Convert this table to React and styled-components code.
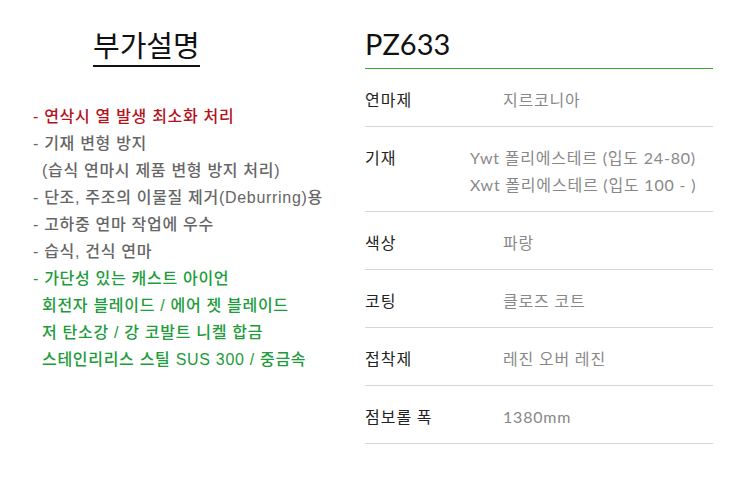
import React from 'react';
import styled, { createGlobalStyle } from 'styled-components';

const GlobalStyle = createGlobalStyle`
  body {
    margin: 0;
    background: #fff;
    font-family: "Liberation Sans", "Noto Sans CJK KR", sans-serif;
  }
`;

const Page = styled.div`
  display: flex;
  width: 730px;
  height: 478px;
  padding-top: 25px;
  box-sizing: border-box;
`;

const LeftCol = styled.div`
  width: 332px;
  padding-left: 33px;
`;

const Title = styled.h2`
  display: inline-block;
  margin: 0 0 0 60px;
  padding-bottom: 2px;
  font-size: 29px;
  font-weight: 400;
  line-height: 38px;
  color: #111;
  border-bottom: 2px solid #111;
  font-family: "Noto Sans CJK KR", sans-serif;
`;

const List = styled.ul`
  list-style: none;
  margin: 36px 0 0;
  padding: 0;
`;

const Item = styled.li`
  font-size: 16px;
  line-height: 27px;
  font-weight: 500;
  letter-spacing: 0.7px;
  white-space: nowrap;
  color: ${(p) => (p.tone === 'red' ? '#b3121d' : p.tone === 'green' ? '#1c9c3a' : '#666')};
  padding-left: ${(p) => (p.indent ? '9px' : '0')};
`;

const RightCol = styled.div`
  width: 348px;
`;

const Model = styled.div`
  font-family: "Lato", "Noto Sans CJK KR", sans-serif;
  font-size: 29px;
  line-height: 38px;
  color: #111;
  padding-bottom: 5px;
  border-bottom: 1.5px solid #3aaa35;
`;

const Row = styled.div`
  display: flex;
  align-items: flex-start;
  border-bottom: 1px solid #d6d6d6;
  padding: 17px 0 13px;
`;

const Label = styled.div`
  width: ${(p) => (p.narrow ? '105px' : '138px')};
  font-family: "Noto Sans CJK KR", sans-serif;
  font-size: 16px;
  line-height: 27px;
  letter-spacing: 1px;
  color: #222;
`;

const Value = styled.div`
  font-family: "Lato", "Noto Sans CJK KR", sans-serif;
  font-size: 16px;
  line-height: 27px;
  letter-spacing: 0.8px;
  color: #888;
`;

const left = [
  { t: '- 연삭시 열 발생 최소화 처리', tone: 'red' },
  { t: '- 기재 변형 방지' },
  { t: '(습식 연마시 제품 변형 방지 처리)', indent: true },
  { t: '- 단조, 주조의 이물질 제거(Deburring)용' },
  { t: '- 고하중 연마 작업에 우수' },
  { t: '- 습식, 건식 연마' },
  { t: '- 가단성 있는 캐스트 아이언', tone: 'green' },
  { t: '회전자 블레이드 / 에어 젯 블레이드', tone: 'green', indent: true },
  { t: '저 탄소강 / 강 코발트 니켈 합금', tone: 'green', indent: true },
  { t: '스테인리리스 스틸 SUS 300 / 중금속', tone: 'green', indent: true },
];

const specs = [
  { label: '연마제', value: ['지르코니아'] },
  { label: '기재', value: ['Ywt 폴리에스테르 (입도 24-80)', 'Xwt 폴리에스테르 (입도 100 - )'], narrow: true },
  { label: '색상', value: ['파랑'] },
  { label: '코팅', value: ['클로즈 코트'] },
  { label: '접착제', value: ['레진 오버 레진'] },
  { label: '점보롤 폭', value: ['1380mm'] },
];

export default function App() {
  return (
    <>
      <GlobalStyle />
      <Page>
        <LeftCol>
          <Title>부가설명</Title>
          <List>
            {left.map((l, i) => (
              <Item key={i} tone={l.tone} indent={l.indent}>{l.t}</Item>
            ))}
          </List>
        </LeftCol>
        <RightCol>
          <Model>PZ633</Model>
          {specs.map((s) => (
            <Row key={s.label}>
              <Label narrow={s.narrow}>{s.label}</Label>
              <Value>
                {s.value.map((v) => (
                  <div key={v}>{v}</div>
                ))}
              </Value>
            </Row>
          ))}
        </RightCol>
      </Page>
    </>
  );
}
